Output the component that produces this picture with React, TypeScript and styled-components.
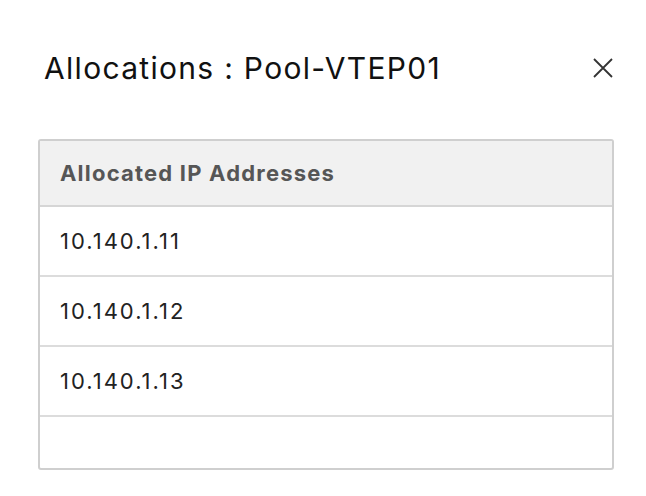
import React from "react";
import styled, { createGlobalStyle } from "styled-components";

const Global = createGlobalStyle`
  html, body { margin: 0; padding: 0; background: #fff; }
  body { font-family: Inter, "Noto Sans", sans-serif; }
`;

const Modal = styled.div`
  width: 646px;
  height: 496px;
  box-sizing: border-box;
  padding: 48px 32px 0 38px;
  display: flex;
  flex-direction: column;
`;

const Header = styled.div`
  display: flex;
  align-items: center;
  justify-content: space-between;
  height: 40px;
  padding-left: 6px;
`;

const Title = styled.h3`
  margin: 0;
  font-size: 30px;
  font-weight: 400;
  color: #111;
  letter-spacing: 1.3px;
`;

const CloseButton = styled.button`
  border: none;
  background: none;
  padding: 0;
  width: 24px;
  height: 24px;
  display: flex;
  align-items: center;
  justify-content: center;
  color: #333;
  margin-right: -1px;
`;

const Table = styled.div`
  margin-top: 51px;
  width: 576px;
  border: 2px solid #cfcfcf;
  border-radius: 3px;
  box-sizing: border-box;
`;

const HeadRow = styled.div`
  height: 64px;
  background: #f1f1f1;
  border-bottom: 2px solid #d6d6d6;
  display: flex;
  align-items: center;
  padding-left: 20px;
  font-size: 22px;
  font-weight: 700;
  color: #565656;
  letter-spacing: 1.2px;
`;

const Row = styled.div<{ $h?: number; $last?: boolean }>`
  height: ${(p) => p.$h ?? 68}px;
  border-bottom: ${(p) => (p.$last ? "none" : "2px solid #dcdcdc")};
  display: flex;
  align-items: center;
  padding-left: 20px;
  font-size: 22px;
  color: #222;
  letter-spacing: 2px;
`;

const ips = ["10.140.1.11", "10.140.1.12", "10.140.1.13"];

export default function App() {
  return (
    <>
      <Global />
      <Modal>
        <Header>
          <Title>Allocations : Pool-VTEP01</Title>
          <CloseButton aria-label="close">
            <svg width="22" height="22" viewBox="0 0 22 22">
              <path d="M2 2 L20 20 M20 2 L2 20" stroke="#333" strokeWidth="1.8" />
            </svg>
          </CloseButton>
        </Header>
        <Table>
          <HeadRow>Allocated IP Addresses</HeadRow>
          {ips.map((ip) => (
            <Row key={ip}>{ip}</Row>
          ))}
          <Row $h={51} $last />
        </Table>
      </Modal>
    </>
  );
}
